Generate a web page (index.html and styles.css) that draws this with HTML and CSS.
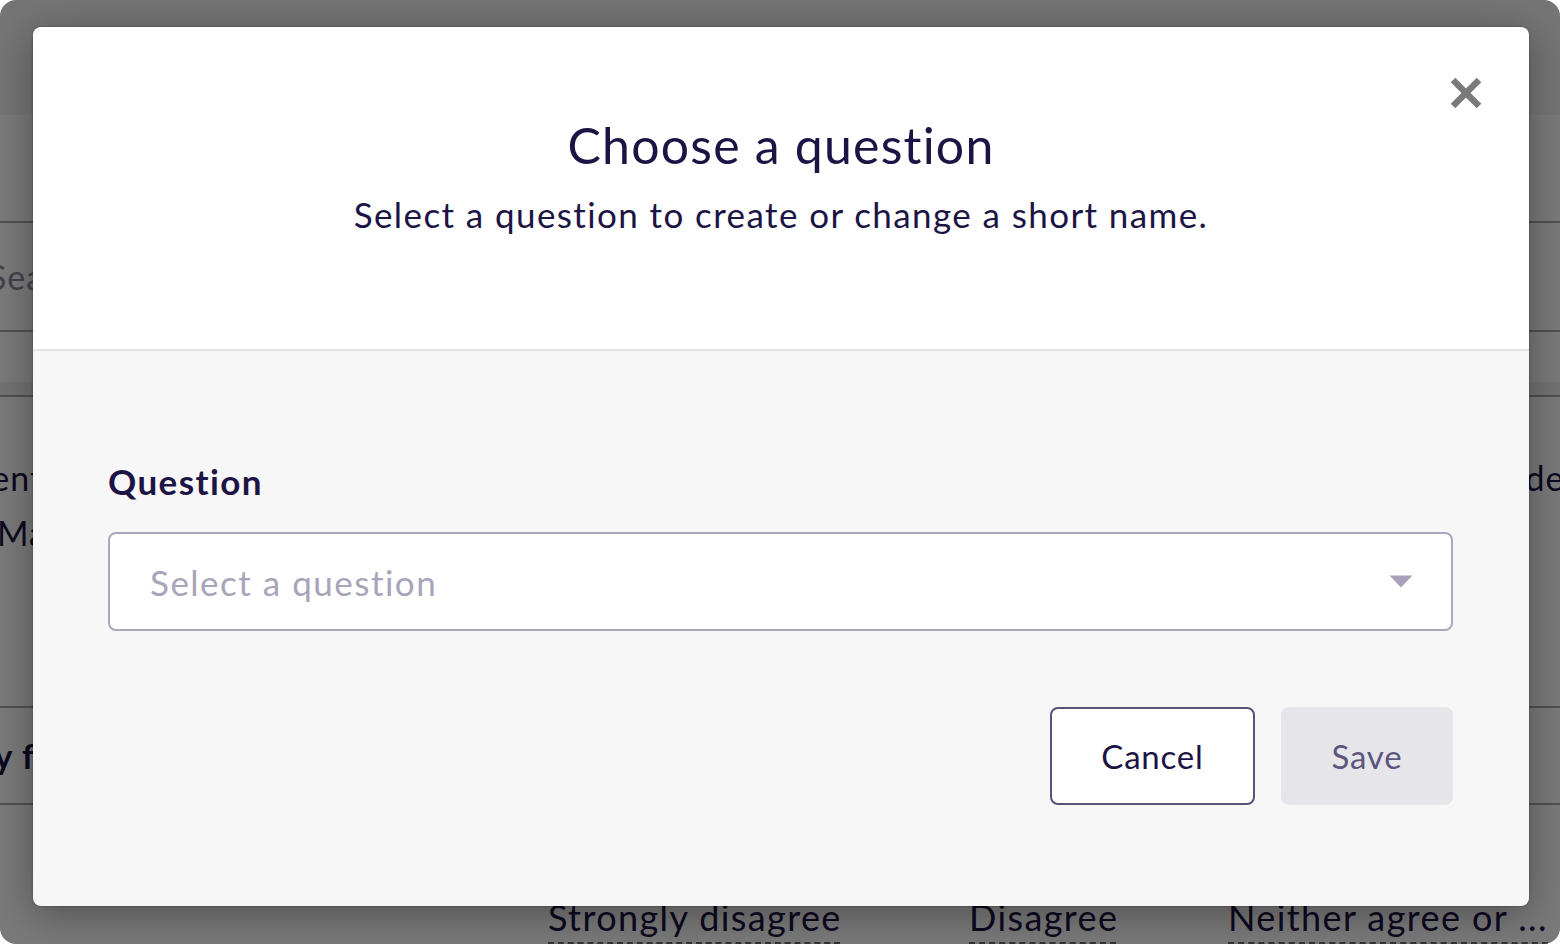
FILE: index.html
```html
<!DOCTYPE html>
<html lang="en">
<head>
<meta charset="utf-8">
<title>Choose a question</title>
<link rel="stylesheet" href="styles.css">
</head>
<body>
<div class="screen">
  <div class="page">
    <div class="page-header"></div>
    <div class="page-intro"></div>
    <div class="search-row"><span class="search-ph">Search questions</span></div>
    <div class="spacer"></div>
    <div class="table-head"></div>
    <div class="table-row tall">
      <div class="cell-left">
        <span class="cut-ent">Sentiment</span>
        <span class="cut-ma">Manager support</span>
      </div>
      <div class="cell-right"><span>Ideas</span></div>
    </div>
    <div class="table-row short">
      <div class="cell-left"><span class="bold cut-y">Loyalty factors</span></div>
    </div>
    <div class="table-foot">
      <span class="scale s1">Strongly disagree</span>
      <span class="scale s2">Disagree</span>
      <span class="scale s3">Neither agree or ...</span>
    </div>
  </div>

  <div class="overlay"></div>

  <div class="modal" role="dialog" aria-labelledby="modal-title">
    <div class="modal-head">
      <h1 id="modal-title" class="modal-title">Choose a question</h1>
      <p class="modal-sub">Select a question to create or change a short name.</p>
      <button class="close" aria-label="Close">
        <svg viewBox="0 0 32 32" width="32" height="32" aria-hidden="true">
          <path d="M3 3 L29 29 M29 3 L3 29" stroke="#7a7a7a" stroke-width="6.5" fill="none" stroke-linecap="butt"/>
        </svg>
      </button>
    </div>
    <div class="modal-body">
      <label class="field-label">Question</label>
      <div class="select">
        <span class="select-ph">Select a question</span>
        <svg class="caret" viewBox="0 0 24 13" width="24" height="13" aria-hidden="true">
          <path d="M0.5 0.5 H23.5 L12 12.5 Z" fill="#a7a2b9"/>
        </svg>
      </div>
      <div class="actions">
        <button class="btn btn-cancel">Cancel</button>
        <button class="btn btn-save">Save</button>
      </div>
    </div>
  </div>
</div>
</body>
</html>
```

FILE: styles.css
```css
html, body {
  margin: 0;
  padding: 0;
  background: #ffffff;
}

.screen {
  position: relative;
  width: 1560px;
  height: 944px;
  border-radius: 16px;
  overflow: hidden;
  font-family: Lato, "Noto Sans", sans-serif;
  font-variant-ligatures: none;
  font-feature-settings: "liga" 0;
  color: #1c1444;
}

/* ----- background page ----- */
.page {
  width: 1560px;
  height: 944px;
  background: #ffffff;
  display: flex;
  flex-direction: column;
}
.page-header {
  height: 115px;
  background: #f4f4f4;
}
.page-intro {
  height: 106px;
  border-bottom: 2px solid #a8a8a8;
}
.search-row {
  height: 107px;
  border-bottom: 2px solid #a8a8a8;
  display: flex;
  align-items: center;
  overflow: hidden;
}
.search-ph {
  font-size: 34px;
  letter-spacing: 1px;
  color: #8a8a9e;
  margin-left: -12px;
  white-space: nowrap;
}
.spacer {
  height: 50px;
}
.table-head {
  height: 13px;
  background: #eeeeee;
  border-bottom: 2px solid #a8a8a8;
}
.table-row {
  display: flex;
  justify-content: space-between;
  border-bottom: 2px solid #a8a8a8;
  overflow: hidden;
}
.table-row.tall {
  height: 309px;
}
.table-row.short {
  height: 95px;
  align-items: center;
}
.cell-left {
  display: flex;
  flex-direction: column;
  gap: 14px;
  padding-top: 60px;
  font-size: 34px;
  letter-spacing: 1px;
  white-space: nowrap;
}
.table-row.short .cell-left {
  padding-top: 0;
}
.cut-ent { margin-left: -118px; }
.cut-ma { margin-left: -3px; }
.cut-y { margin-left: -103px; }
.bold { font-weight: 700; }
.cell-right {
  padding-top: 60px;
  font-size: 34px;
  letter-spacing: 1px;
  margin-right: -38px;
  white-space: nowrap;
}
.table-foot {
  flex: 1;
  display: flex;
  align-items: flex-start;
  padding-top: 90px;
  font-size: 36px;
  letter-spacing: 1.4px;
  white-space: nowrap;
}
.scale {
  border-bottom: 2px dashed #6f6f6f;
  padding-bottom: 3px;
}
.s1 { margin-left: 548px; width: 292px; }
.s2 { margin-left: 129px; width: 147px; }
.s3 { margin-left: 112px; }

.overlay {
  position: absolute;
  inset: 0;
  background: rgba(0, 0, 0, 0.52);
}

/* ----- modal ----- */
.modal {
  position: absolute;
  left: 33px;
  top: 27px;
  width: 1496px;
  height: 879px;
  border-radius: 8px;
  overflow: hidden;
  display: flex;
  flex-direction: column;
  box-shadow: 0 8px 40px rgba(0, 0, 0, 0.35), 0 0 2px rgba(0, 0, 0, 0.4);
}
.modal-head {
  position: relative;
  height: 324px;
  flex: none;
  background: #ffffff;
  border-bottom: 2px solid #e4e4e6;
  text-align: center;
  padding-top: 88px;
  box-sizing: border-box;
}
.modal-title {
  margin: 0;
  font-size: 50px;
  letter-spacing: 1.2px;
  line-height: 60px;
  font-weight: 400;
  color: #1c1444;
}
.modal-sub {
  margin: 19px 0 0;
  font-size: 35px;
  letter-spacing: 1.4px;
  line-height: 40px;
  color: #1c1444;
}
.close {
  position: absolute;
  top: 50px;
  right: 47px;
  width: 32px;
  height: 32px;
  padding: 0;
  border: 0;
  background: transparent;
  cursor: pointer;
}
.close svg { display: block; }

.modal-body {
  flex: 1;
  background: #f7f7f7;
  padding: 110px 76px 0 75px;
  display: flex;
  flex-direction: column;
}
.field-label {
  font-size: 35px;
  letter-spacing: 1.4px;
  line-height: 40px;
  font-weight: 700;
  color: #1c1444;
}
.select {
  margin-top: 31px;
  height: 99px;
  box-sizing: border-box;
  border: 2px solid #aaa6bd;
  border-radius: 8px;
  background: #ffffff;
  display: flex;
  align-items: center;
  justify-content: space-between;
  padding: 0 38px 0 40px;
}
.select-ph {
  font-size: 35px;
  letter-spacing: 1.5px;
  color: #a8a4b9;
}
.caret { display: block; }

.actions {
  margin-top: 76px;
  display: flex;
  justify-content: flex-end;
  gap: 26px;
}
.btn {
  height: 98px;
  box-sizing: border-box;
  border-radius: 8px;
  font-family: Lato, "Noto Sans", sans-serif;
  font-size: 33px;
  letter-spacing: 0.8px;
  padding: 0;
  cursor: pointer;
}
.btn-cancel {
  width: 205px;
  background: #ffffff;
  border: 2px solid #57527a;
  color: #1c1444;
}
.btn-save {
  width: 172px;
  background: #e6e5ea;
  border: 0;
  color: #5c567f;
}
```
